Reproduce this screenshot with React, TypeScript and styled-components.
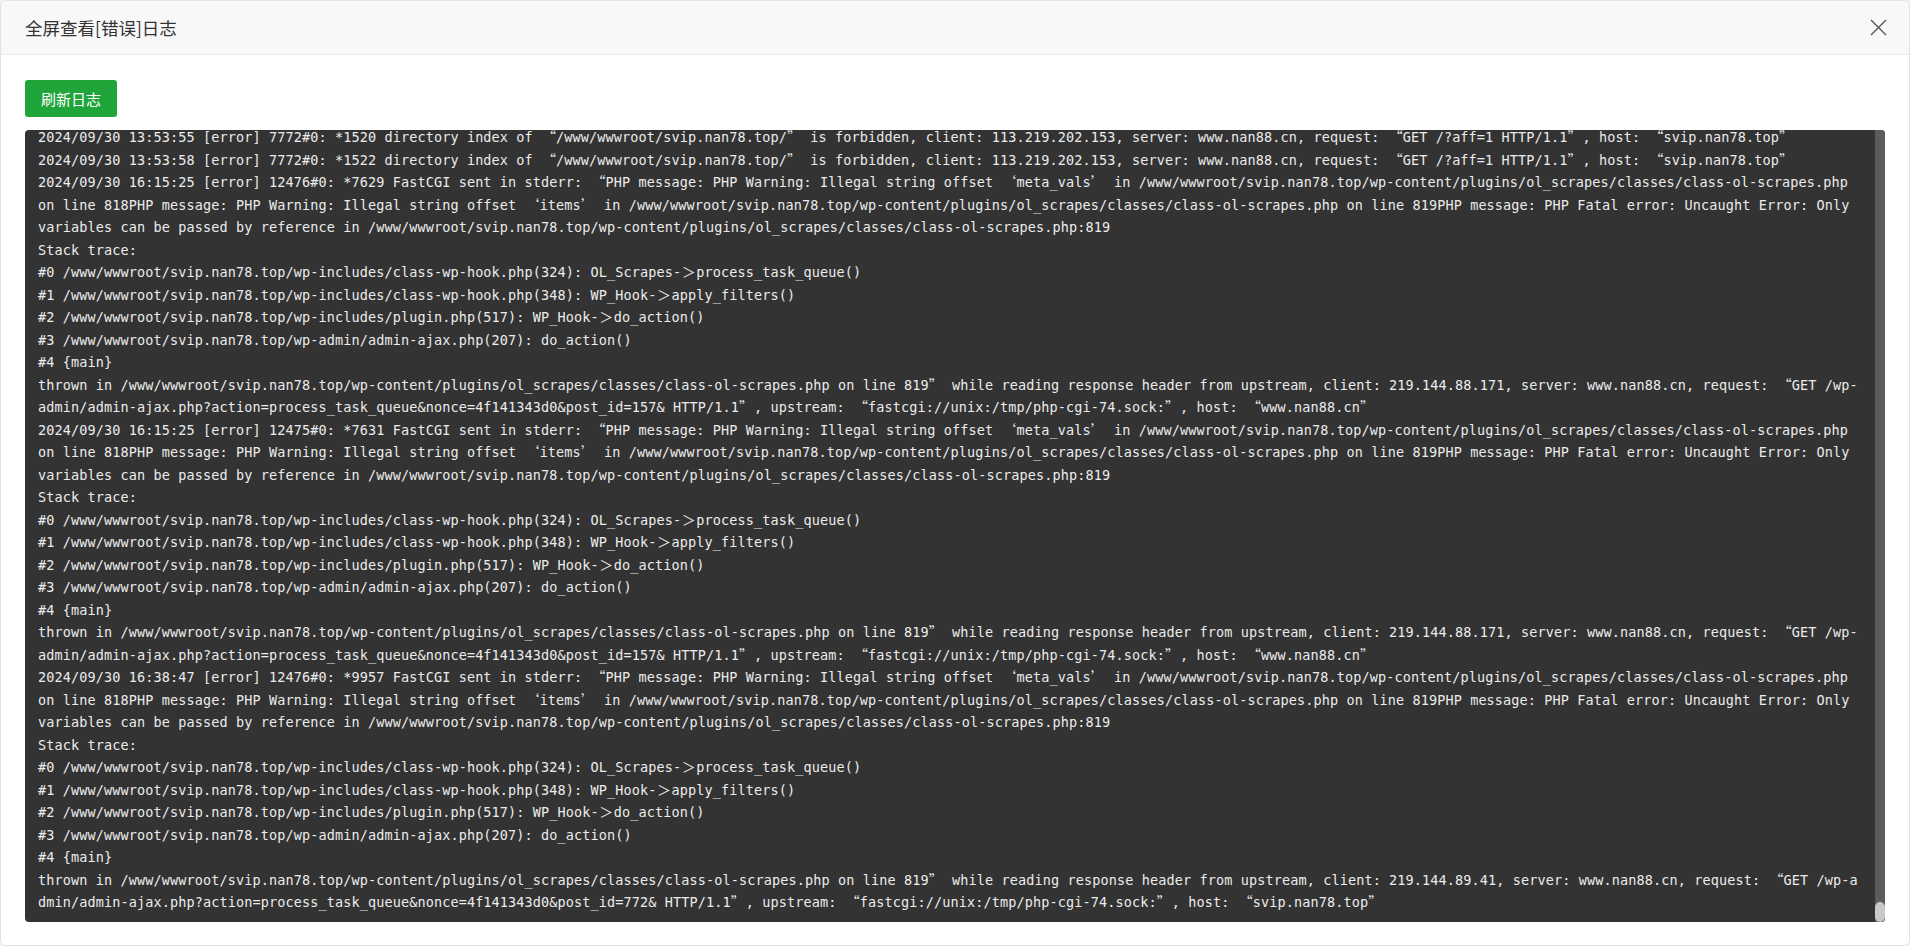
import { useLayoutEffect, useRef, useState } from "react";
import styled, { createGlobalStyle } from "styled-components";

const ROOT = "/www/wwwroot/svip.nan78.top";
const SCRAPES = `${ROOT}/wp-content/plugins/ol_scrapes/classes/class-ol-scrapes.php`;

type FastCgi = {
  time: string;
  pid: number;
  id: number;
  client: string;
  post: number;
  host: string;
};

const dirEntry = (time: string, id: number) =>
  `2024/09/30 ${time} [error] 7772#0: *${id} directory index of “${ROOT}/” is forbidden, client: 113.219.202.153, server: www.nan88.cn, request: “GET /?aff=1 HTTP/1.1”, host: “svip.nan78.top”`;

const fastCgiEntry = (e: FastCgi) => [
  `2024/09/30 ${e.time} [error] ${e.pid}#0: *${e.id} FastCGI sent in stderr: “PHP message: PHP Warning: Illegal string offset ‘meta_vals’ in ${SCRAPES} on line 818PHP message: PHP Warning: Illegal string offset ‘items’ in ${SCRAPES} on line 819PHP message: PHP Fatal error: Uncaught Error: Only variables can be passed by reference in ${SCRAPES}:819`,
  "Stack trace:",
  `#0 ${ROOT}/wp-includes/class-wp-hook.php(324): OL_Scrapes-＞process_task_queue()`,
  `#1 ${ROOT}/wp-includes/class-wp-hook.php(348): WP_Hook-＞apply_filters()`,
  `#2 ${ROOT}/wp-includes/plugin.php(517): WP_Hook-＞do_action()`,
  `#3 ${ROOT}/wp-admin/admin-ajax.php(207): do_action()`,
  "#4 {main}",
  `thrown in ${SCRAPES} on line 819” while reading response header from upstream, client: ${e.client}, server: www.nan88.cn, request: “GET /wp-admin/admin-ajax.php?action=process_task_queue&nonce=4f141343d0&post_id=${e.post}& HTTP/1.1”, upstream: “fastcgi://unix:/tmp/php-cgi-74.sock:”, host: “${e.host}”`,
];

const pad = (n: number) => String(n).padStart(2, "0");

// older part of the log; the box is scrolled to its end like the real one
const history: string[] = Array.from({ length: 124 }, (_, i) => {
  const sec = 9 * 3600 + i * 97;
  return fastCgiEntry({
    time: `${pad(Math.floor(sec / 3600))}:${pad(Math.floor(sec / 60) % 60)}:${pad(sec % 60)}`,
    pid: 12470 + (i % 7),
    id: 400 + i * 9,
    client: i % 2 ? "219.144.88.171" : "219.144.89.41",
    post: 100 + i,
    host: i % 2 ? "www.nan88.cn" : "svip.nan78.top",
  });
}).flat();

const logLines: string[] = [
  ...history,
  dirEntry("13:53:55", 1520),
  dirEntry("13:53:58", 1522),
  ...fastCgiEntry({ time: "16:15:25", pid: 12476, id: 7629, client: "219.144.88.171", post: 157, host: "www.nan88.cn" }),
  ...fastCgiEntry({ time: "16:15:25", pid: 12475, id: 7631, client: "219.144.88.171", post: 157, host: "www.nan88.cn" }),
  ...fastCgiEntry({ time: "16:38:47", pid: 12476, id: 9957, client: "219.144.89.41", post: 772, host: "svip.nan78.top" }),
];

const WIDE_ALIGN: Record<string, "left" | "right" | "center"> = {
  "“": "right",
  "”": "left",
  "‘": "center",
  "’": "left",
  "＞": "center",
};

function LogText({ text }: { text: string }) {
  const parts = text.split(/([“”‘’＞])/);
  return (
    <>
      {parts.map((p, i) =>
        WIDE_ALIGN[p] ? (
          <Wide key={i} $align={WIDE_ALIGN[p]}>
            {p}
          </Wide>
        ) : (
          p
        )
      )}
    </>
  );
}

function CloseIcon() {
  return (
    <svg width="17" height="17" viewBox="0 0 17 17">
      <path d="M1 1L16 16M16 1L1 16" stroke="#555" strokeWidth="1.4" fill="none" />
    </svg>
  );
}

export default function App() {
  const scrollRef = useRef<HTMLDivElement>(null);
  const [thumb, setThumb] = useState(20);

  useLayoutEffect(() => {
    const el = scrollRef.current;
    if (!el) return;
    el.scrollTop = el.scrollHeight;
    const h = el.clientHeight;
    setThumb(Math.max(20, Math.round((h * h) / el.scrollHeight)));
  }, []);

  return (
    <>
      <GlobalStyle />
      <Modal>
        <Header>
          <Title>全屏查看[错误]日志</Title>
          <CloseButton aria-label="关闭">
            <CloseIcon />
          </CloseButton>
        </Header>
        <Body>
          <RefreshButton>刷新日志</RefreshButton>
          <LogBox>
            <LogScroll ref={scrollRef}>
              {logLines.map((line, i) => (
                <LogLine key={i}>
                  <LogText text={line} />
                </LogLine>
              ))}
            </LogScroll>
            <ScrollTrack>
              <ScrollThumb style={{ height: thumb }} />
            </ScrollTrack>
          </LogBox>
        </Body>
      </Modal>
    </>
  );
}

const GlobalStyle = createGlobalStyle`
  html, body {
    margin: 0;
    padding: 0;
    background: #f2f2f2;
    font-family: "Noto Sans CJK SC", "Noto Sans", sans-serif;
  }
  * { box-sizing: border-box; }
`;

const Modal = styled.div`
  width: 100vw;
  height: 100vh;
  display: flex;
  flex-direction: column;
  background: #fff;
  border: 1px solid #e3e3e3;
  border-radius: 6px;
  overflow: hidden;
`;

const Header = styled.div`
  height: 54px;
  flex: none;
  display: flex;
  align-items: center;
  justify-content: space-between;
  padding: 0 20px 0 24px;
  background: #f8f8f8;
  border-bottom: 1px solid #eaeaea;
`;

const Title = styled.div`
  font-size: 17.5px;
  color: #333;
  font-family: "Noto Sans CJK SC", "Liberation Sans", sans-serif;
`;

const CloseButton = styled.button`
  display: flex;
  align-items: center;
  justify-content: center;
  width: 22px;
  height: 22px;
  padding: 0;
  border: 0;
  background: none;
  cursor: pointer;
`;

const Body = styled.div`
  flex: 1;
  min-height: 0;
  display: flex;
  flex-direction: column;
  align-items: flex-start;
  padding: 25px 24px 23px;
`;

const RefreshButton = styled.button`
  width: 92px;
  height: 37px;
  flex: none;
  border: 0;
  border-radius: 3px;
  background: #20a53a;
  color: #fff;
  font-size: 15px;
  font-family: "Noto Sans CJK SC", sans-serif;
  cursor: pointer;
`;

const LogBox = styled.div`
  margin-top: 13px;
  flex: 1;
  min-height: 0;
  align-self: stretch;
  display: flex;
  background: #333;
  border-radius: 4px;
  overflow: hidden;
`;

const LogScroll = styled.div`
  flex: 1;
  min-width: 0;
  overflow: hidden;
  padding: 6px 13px 8px 13px;
  color: #ececec;
  font-family: "DejaVu Sans Mono", "Liberation Mono", monospace;
  font-size: 13.5px;
  letter-spacing: 0.12px;
  line-height: 22.5px;
`;

const ScrollTrack = styled.div`
  width: 10px;
  flex: none;
  display: flex;
  flex-direction: column;
  justify-content: flex-end;
  background: #5c5c5c;
`;

const ScrollThumb = styled.div`
  width: 10px;
  background: #c8c8c8;
  border-radius: 5px;
`;

const LogLine = styled.div`
  white-space: pre-wrap;
  word-break: break-all;
`;

const Wide = styled.span<{ $align: "left" | "right" | "center" }>`
  display: inline-block;
  width: 15px;
  text-align: ${(p) => p.$align};
  font-family: "Noto Sans CJK SC", sans-serif;
  font-size: 14px;
  line-height: 1;
  letter-spacing: 0;
`;
